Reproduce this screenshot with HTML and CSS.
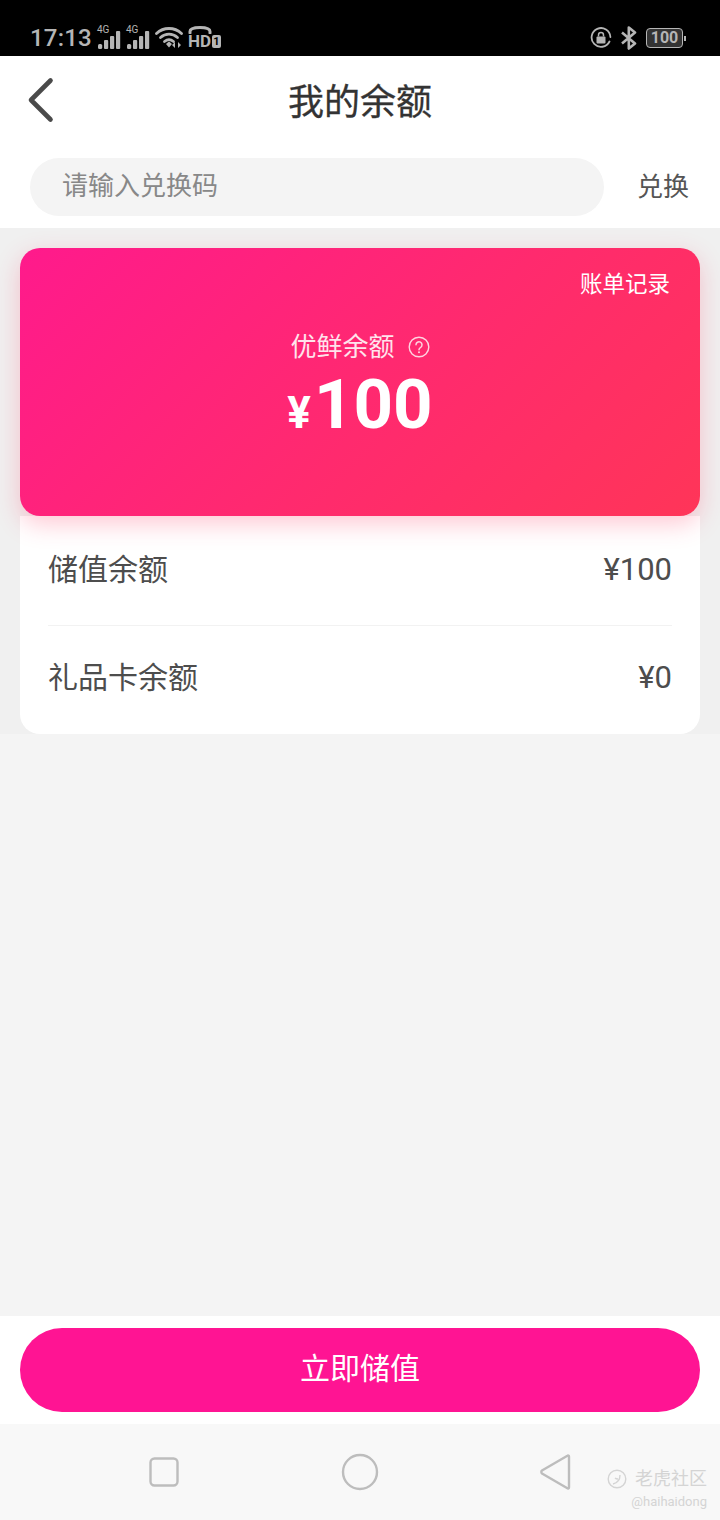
FILE: index.html
```html
<!DOCTYPE html>
<html lang="zh-CN">
<head>
<meta charset="UTF-8" />
<meta name="viewport" content="width=device-width, initial-scale=1" />
<title>我的余额</title>
<link rel="stylesheet" href="styles.css">
</head>
<body>
<div class="screen">

  <!-- Status bar -->
  <div class="status">
    <div class="status-side">
      <span class="time">17:13</span>
      <span class="signal">
        <span class="signal-tag">4G</span>
        <svg width="24" height="18" viewBox="0 0 24 18"><g fill="#b5b5b5"><rect x="1" y="13" width="4.200" height="5" rx="1.500"/><rect x="7" y="9" width="4.200" height="9" rx="1"/><rect x="13" y="5" width="4.200" height="13" rx="1"/><rect x="19" y="0" width="4.200" height="18" rx="1"/></g></svg>
      </span>
      <span class="signal">
        <span class="signal-tag">4G</span>
        <svg width="24" height="18" viewBox="0 0 24 18"><g fill="#b5b5b5"><rect x="1" y="13" width="4.200" height="5" rx="1.500"/><rect x="7" y="9" width="4.200" height="9" rx="1"/><rect x="13" y="5" width="4.200" height="13" rx="1"/><rect x="19" y="0" width="4.200" height="18" rx="1"/></g></svg>
      </span>
      <svg class="wifi" width="30" height="24" viewBox="0 0 30 24"><g fill="none" stroke="#b5b5b5" stroke-width="2.800" stroke-linecap="round"><path d="M1.500 7.500C8.500 .8 19.500 .8 26.500 7.500"/><path d="M5.500 11.500C10.500 7 17.500 7 22.500 11.500"/><path d="M9.500 15.500C12.500 13 15.500 13 18.500 15.500"/></g><path d="M11 18l3-2.400 3 2.400-3 3.600z" fill="#b5b5b5"/><path d="M20 22v-6l-3 3zM23 16v6l3-3z" fill="#b5b5b5"/></svg>
      <span class="hd">
        <svg width="24" height="8" viewBox="0 0 24 8"><path d="M2 7V5.500C2 2.500 7 1.500 12 1.500S22 2.500 22 5.500V7" fill="none" stroke="#b5b5b5" stroke-width="3" stroke-linecap="round"/></svg>
        <span class="hd-row"><span class="hd-text">HD</span><span class="hd-num">1</span></span>
      </span>
    </div>
    <div class="status-side status-right">
      <svg width="22" height="22" viewBox="0 0 22 22"><path d="M19.500 14.500A9.400 9.400 0 1 1 20.400 10" fill="none" stroke="#b5b5b5" stroke-width="1.800" stroke-linecap="round"/><rect x="6.500" y="9.500" width="9" height="7" rx="1" fill="#b5b5b5"/><path d="M8.500 9.500V8a2.500 2.500 0 0 1 5 0v1.500" fill="none" stroke="#b5b5b5" stroke-width="1.500"/></svg>
      <svg width="18" height="24" viewBox="0 0 18 24"><path d="M2 6.500l13 11-6.200 5V1.500l6.200 5-13 11" fill="none" stroke="#b5b5b5" stroke-width="2.600" stroke-linejoin="round"/></svg>
      <span class="battery"><span class="battery-body">100</span><span class="battery-tip"></span></span>
    </div>
  </div>

  <!-- Header -->
  <header class="topbar">
    <svg class="back" width="28" height="46" viewBox="0 0 28 46"><path d="M23.500 3.500L4 23l19.500 19.500" fill="none" stroke="#4a4a4a" stroke-width="4.600" stroke-linecap="round" stroke-linejoin="round"/></svg>
    <h1>我的余额</h1>
  </header>

  <div class="redeem">
    <div class="redeem-input">请输入兑换码</div>
    <span class="redeem-btn">兑换</span>
  </div>

  <main class="content">
    <div class="wallet">
      <div class="balance-card">
        <div class="bill-link">账单记录</div>
        <div class="balance-label">
          优鲜余额
          <svg width="22" height="22" viewBox="0 0 22 22"><circle cx="11" cy="11" r="9.800" fill="none" stroke="#ffd3e0" stroke-width="1.400"/><path d="M8 8.800a3 3 0 1 1 4.700 2.500c-1.100.7-1.700 1.300-1.700 2.400" fill="none" stroke="#ffd3e0" stroke-width="1.500" stroke-linecap="round"/><circle cx="11" cy="16.200" r="1" fill="#ffd3e0"/></svg>
        </div>
        <div class="balance-amount"><span class="yen">¥</span>100</div>
      </div>
      <div class="detail-row"><span>储值余额</span><span class="detail-value">¥100</span></div>
      <div class="detail-row"><span>礼品卡余额</span><span class="detail-value">¥0</span></div>
    </div>
  </main>

  <div class="action">
    <div class="action-btn">立即储值</div>
  </div>

  <!-- Android nav bar -->
  <nav class="navbar">
    <svg width="30" height="30" viewBox="0 0 30 30"><rect x="1.500" y="1.500" width="27" height="27" rx="4" fill="none" stroke="#bdbdbd" stroke-width="2.400"/></svg>
    <svg width="38" height="38" viewBox="0 0 38 38"><circle cx="19" cy="19" r="17" fill="none" stroke="#bdbdbd" stroke-width="2.400"/></svg>
    <svg width="34" height="38" viewBox="0 0 34 38"><path d="M30 3.500v31a1 1 0 0 1-1.600.8L3 20.500a2 2 0 0 1 0-3L28.400 2.700a1 1 0 0 1 1.600.8z" fill="none" stroke="#bdbdbd" stroke-width="2.400" stroke-linejoin="round"/></svg>
  </nav>

  <div class="watermark">
    <div class="watermark-name">
      <svg width="20" height="20" viewBox="0 0 20 20"><circle cx="10" cy="10" r="8.800" fill="none" stroke="#d4d4d4" stroke-width="1.400"/><path d="M6 15c4-1 7-4 7-9M8 9c1 1 2 1 3 1" fill="none" stroke="#d4d4d4" stroke-width="1.400"/></svg>
      老虎社区
    </div>
    <div class="watermark-user">@haihaidong</div>
  </div>

</div>
</body>
</html>
```

FILE: styles.css
```css
* {
  margin: 0; padding: 0; box-sizing: border-box;
}
body {
  background: #f4f4f4;
  font-family: Roboto, "Noto Sans CJK SC", sans-serif;
}
.screen {
  position: relative;
  width: 720px;
  height: 1520px;
  display: flex;
  flex-direction: column;
  overflow: hidden;
}

/* Status bar */
.status {
  height: 56px;
  flex: none;
  background: #000;
  color: #b5b5b5;
  display: flex;
  justify-content: space-between;
  align-items: center;
  padding: 20px 34px 0 30px;
}
.status-side {
  display: flex;
  align-items: center;
  gap: 5px;
}
.status-right {
  gap: 8px;
}
.time {
  font-size: 24px;
  font-weight: 500;
  letter-spacing: 0.2px;
}
.signal {
  display: flex;
  flex-direction: column;
  align-items: flex-end;
  width: 24px;
  height: 22px;
  position: relative;
  justify-content: flex-end;
}
.signal-tag {
  position: absolute;
  left: 0;
  top: -3px;
  font-size: 10px;
  line-height: 12px;
}
.hd {
  display: flex;
  flex-direction: column;
  align-items: flex-start;
  width: 32px;
  margin-left: -2px;
  margin-top: -2px;
}
.hd-row {
  display: flex;
  align-items: center;
  gap: 1px;
}
.hd-text {
  font-size: 17px;
  font-weight: 700;
  line-height: 15px;
}
.hd-num {
  background: #b5b5b5;
  color: #000;
  font-size: 11px;
  font-weight: 700;
  line-height: 13px;
  width: 9px;
  text-align: center;
  border-radius: 2px;
}
.battery {
  display: flex;
  align-items: center;
  gap: 1px;
}
.battery-body {
  width: 37px;
  height: 20px;
  border: 1.500px solid #b5b5b5;
  border-radius: 4px;
  background: #333;
  font-size: 16px;
  font-weight: 700;
  line-height: 17px;
  text-align: center;
}
.battery-tip {
  width: 2px;
  height: 5px;
  background: #b5b5b5;
}

/* Header */
.topbar {
  flex: none;
  height: 90px;
  background: #fff;
  display: flex;
  align-items: center;
  justify-content: center;
  position: relative;
  padding-bottom: 4px;
}
.topbar h1 {
  font-size: 36px;
  font-weight: 400;
  color: #333;
  -webkit-text-stroke: 0.3px #333;
}
.back {
  position: absolute;
  left: 27px;
  top: 21px;
}

/* Redeem code */
.redeem {
  flex: none;
  height: 82px;
  background: #fff;
  display: flex;
  align-items: flex-start;
  padding: 12px 31px 0 30px;
  justify-content: space-between;
}
.redeem-input {
  width: 574px;
  height: 58px;
  border-radius: 29px;
  background: #f4f4f4;
  color: #888;
  font-size: 26px;
  line-height: 56px;
  padding-left: 32px;
}
.redeem-btn {
  font-size: 26px;
  color: #555;
  line-height: 58px;
}

/* Balance */
.content {
  flex: 1;
}
.wallet {
  background: #f0f0f0;
  padding: 20px 20px 0;
}
.balance-card {
  position: relative;
  z-index: 1;
  height: 268px;
  border-radius: 20px;
  background: linear-gradient(135deg, #ff1a8c 0%, #ff2a6e 55%, #ff3558 100%);
  box-shadow: 0 8px 24px rgba(255, 60, 100, 0.28);
  color: #fff;
  display: flex;
  flex-direction: column;
  align-items: center;
}
.bill-link {
  align-self: flex-end;
  font-size: 22.500px;
  line-height: 32px;
  margin: 20px 30px 0 0;
}
.balance-label {
  display: flex;
  align-items: center;
  gap: 13px;
  font-size: 26px;
  line-height: 36px;
  margin-top: 29px;
  color: #ffe3ec;
}
.balance-amount {
  font-size: 69px;
  font-weight: 700;
  line-height: 76px;
  margin-top: 2px;
}
.yen {
  font-size: 44px;
  margin-right: 3px;
}
.detail-row {
  height: 109px;
  background: #fff;
  display: flex;
  justify-content: space-between;
  align-items: center;
  padding: 0 28px 8px;
  font-size: 30px;
  color: #4d4d4d;
  position: relative;
}
.balance-card + .detail-row::after {
  content: "";
  position: absolute;
  left: 28px;
  right: 28px;
  bottom: -1px;
  height: 1px;
  background: #f2f2f2;
  z-index: 1;
}
.detail-row:last-child {
  border-radius: 0 0 20px 20px;
  padding-bottom: 10px;
}
.detail-value {
  font-size: 31px;
  margin-top: 5px;
}

/* Bottom button */
.action {
  flex: none;
  height: 108px;
  background: #fff;
  padding: 12px 20px;
}
.action-btn {
  height: 84px;
  border-radius: 42px;
  background: #ff1493;
  color: #fff;
  font-size: 30px;
  line-height: 82px;
  text-align: center;
}

/* Android nav bar */
.navbar {
  flex: none;
  height: 96px;
  background: #f8f8f8;
  display: grid;
  grid-template-columns: repeat(3, 196px);
  justify-content: center;
  justify-items: center;
  align-items: center;
}

/* Watermark over the nav bar */
.watermark {
  position: absolute;
  right: 13px;
  top: 1467px;
  color: #d4d4d4;
  text-align: right;
}
.watermark-name {
  display: flex;
  align-items: center;
  gap: 8px;
  font-size: 18px;
  line-height: 24px;
}
.watermark-user {
  font-size: 13px;
  line-height: 18px;
  margin-top: 2px;
}
```
